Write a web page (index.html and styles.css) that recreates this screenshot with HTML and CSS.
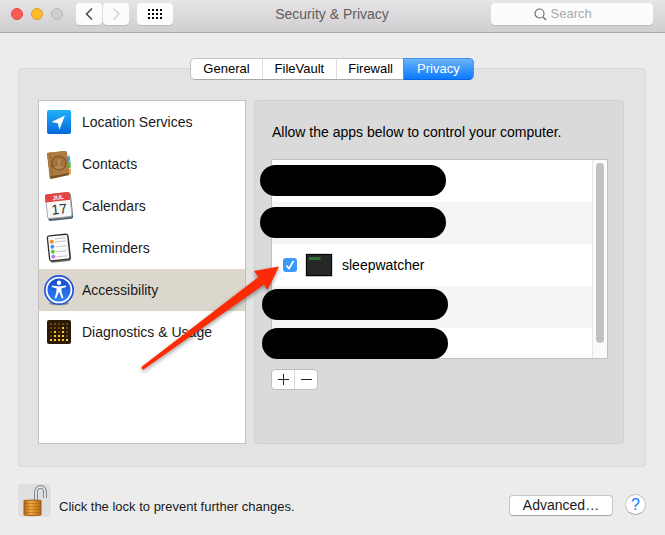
FILE: index.html
```html
<!DOCTYPE html>
<html lang="en">
<head>
<meta charset="utf-8">
<meta name="viewport" content="width=device-width, initial-scale=1">
<title>Security &amp; Privacy</title>
<link rel="stylesheet" href="styles.css">
</head>
<body>
<header class="toolbar">
  <div class="toolbar-left">
    <div class="lights">
      <button class="light close" aria-label="Close"></button>
      <button class="light minimize" aria-label="Minimize"></button>
      <button class="light zoom" aria-label="Zoom" disabled></button>
    </div>
    <div class="history">
      <button class="tool" aria-label="Back"><svg width="10" height="14" viewBox="0 0 10 14"><path d="M8 1.500 2.500 7 8 12.500" fill="none" stroke="#4d4d4d" stroke-width="1.600"/></svg></button>
      <button class="tool" aria-label="Forward" disabled><svg width="10" height="14" viewBox="0 0 10 14"><path d="M2.500 1.500 8 7l-5.500 5.500" fill="none" stroke="#cfcfcf" stroke-width="1.400"/></svg></button>
    </div>
    <button class="tool show-all" aria-label="Show All"><svg width="14" height="10" viewBox="0 0 14 10"><path d="M0 1h14M0 5h14M0 9h14" stroke="#000" stroke-width="2" stroke-dasharray="2 2"/></svg></button>
  </div>
  <h1 class="title">Security &amp; Privacy</h1>
  <label class="search">
    <svg width="13" height="13" viewBox="0 0 13 13"><circle cx="5.500" cy="5.500" r="4.500" fill="none" stroke="#6c6c6c" stroke-width="1.200"/><path d="m9 9 3 3" stroke="#6c6c6c" stroke-width="1.400"/></svg>
    <input type="search" placeholder="Search" aria-label="Search">
  </label>
</header>

<main class="content">
  <div class="tabs" role="tablist">
    <button class="tab" role="tab" aria-selected="false">General</button>
    <button class="tab" role="tab" aria-selected="false">FileVault</button>
    <button class="tab" role="tab" aria-selected="false">Firewall</button>
    <button class="tab active" role="tab" aria-selected="true">Privacy</button>
  </div>

  <section class="group">
    <nav class="sidebar">
      <a class="item" href="#location">
        <svg width="30" height="32" viewBox="0 0 30 32"><defs><linearGradient id="loc" x2="0" y2="1"><stop stop-color="#20b2fa"/><stop offset="1" stop-color="#0767dc"/></linearGradient></defs><rect x="3" y="4" width="24" height="24" rx="2" fill="url(#loc)"/><path d="M21 9.500 7.500 16l6.500 1.200 1.300 6.500z" fill="#fff"/></svg>
        Location Services</a>
      <a class="item" href="#contacts">
        <svg width="30" height="32" viewBox="0 0 30 32"><path d="M22 5l4 1 1 21-4 2z" fill="#e9e6df"/><path d="m23 8 3 .5.300 5-3 .2z" fill="#42a7dc"/><path d="m23 14 3.500-.2.300 6-3.500.2z" fill="#62b554"/><path d="m23 21 3.800-.3.200 5-3.500.6z" fill="#eda337"/><path d="M3 5 21 3q1.500 0 1.700 1.500L25 26q0 1-1 1.300L7 31q-1 0-1.200-1z" fill="#795224"/><path d="M3 5 21 3q1.500 0 1.700 1.500L24.800 25 6 28.500z" fill="#ae7b43"/><path d="m6 4.600 2.500 23.500" stroke="#946535" fill="none"/><circle cx="15" cy="15" r="7" fill="#a87639" stroke="#7d5327" stroke-width="1.200"/><path d="M9.500 19.500q1-2 4-2.500v-1q-3-5.500 1.500-6 4.500.5 1.500 6v1q3 .5 4 2.500-5.500 4-11 0z" fill="#b78a55" stroke="#86592c" stroke-width=".7"/></svg>
        Contacts</a>
      <a class="item" href="#calendars">
        <svg width="30" height="32" viewBox="0 0 30 32"><g transform="rotate(-6 15 16)"><rect x="3" y="4" width="25" height="26" rx="2" fill="#55616a"/><rect x="2.500" y="3.500" width="24.500" height="24" rx="2" fill="#f8f8f8" stroke="#a6abb0"/><path d="M2 11V5q0-2 2-2h21q2 0 2 2v6z" fill="#e34440"/><text class="cal-month" x="15" y="9.500">JUL</text><text class="cal-day" x="15" y="24">17</text></g></svg>
        Calendars</a>
      <a class="item" href="#reminders">
        <svg width="30" height="32" viewBox="0 0 30 32"><g transform="rotate(-6 15 16)"><rect x="5" y="4" width="21" height="26" rx="2.500" fill="#777"/><rect x="4.500" y="3" width="20.500" height="25" rx="2" fill="#fafafa" stroke="#303030" stroke-width="1.300"/><path d="M11.500 6.500h11M11.500 9.500h11M11.500 14.500h11M11.500 19.500h11M11.500 24.500h11" stroke="#c6c6c6"/><circle cx="8.500" cy="9" r="2" fill="#f58b1d"/><circle cx="8.500" cy="14" r="2" fill="#4f8bea"/><circle cx="8.500" cy="19" r="2" fill="#58c83e"/><circle cx="8.500" cy="24" r="2" fill="#bd78e4"/></g></svg>
        Reminders</a>
      <a class="item selected" href="#accessibility" aria-current="page">
        <svg width="30" height="32" viewBox="0 0 30 32"><defs><linearGradient id="acc" x2="0" y2="1"><stop stop-color="#1746c8"/><stop offset="1" stop-color="#2e86fb"/></linearGradient></defs><ellipse cx="15" cy="29.500" rx="10" ry="1.800" fill="#000" opacity=".35"/><circle cx="15" cy="16" r="15" fill="#2453d6"/><circle cx="15" cy="16" r="12.400" fill="url(#acc)" stroke="#fff" stroke-width="1.800"/><circle cx="15" cy="8.800" r="2.200" fill="#fff"/><path d="m8 11.500 5.500.8h3l5.500-.8.3 1.500-5 1.500.5 4 1.600 5.500-1.500.5-2.500-6h-.8l-2.500 6-1.500-.5 1.600-5.500.5-4-5-1.500z" fill="#fff"/></svg>
        Accessibility</a>
      <a class="item" href="#diagnostics">
        <svg width="30" height="32" viewBox="0 0 30 32"><rect x="3" y="4" width="24" height="24" rx="2" fill="#2b1a07"/><path d="M6 8h19M6 12h19M6 16h19M6 20h19M6 24h19" stroke="#6b430d" stroke-width="2" stroke-dasharray="2 2"/><path d="M6 24h19M14 20h7M10 16h1M18 16h3M18 12h3M10 16h2M10 20h2" stroke="#ffc826" stroke-width="2" stroke-dasharray="2 2"/></svg>
        Diagnostics &amp; Usage</a>
    </nav>

    <div class="pane">
      <p class="prompt">Allow the apps below to control your computer.</p>
      <div class="applist">
        <ul class="rows">
          <li class="row"><span class="redacted"></span></li>
          <li class="row"><span class="redacted"></span></li>
          <li class="row">
            <label class="app">
              <input class="check" type="checkbox" checked>
              <svg width="28" height="25" viewBox="0 0 28 25"><rect x=".5" y=".5" width="27" height="23.500" fill="#b6c0c5"/><rect x="1" y="1" width="26" height="22" fill="#050505"/><rect x="2" y="2" width="24" height="20" fill="#272727"/><text class="exec" x="4" y="6.500">exec</text></svg>
              sleepwatcher
            </label>
          </li>
          <li class="row"><span class="redacted inset"></span></li>
          <li class="row last"><span class="redacted inset"></span></li>
        </ul>
        <div class="track"><div class="thumb"></div></div>
      </div>
      <div class="addremove">
        <button aria-label="Add"><svg width="11" height="11" viewBox="0 0 11 11"><path d="M0 5.500h11M5.500 0v11" stroke="#222" stroke-width="1"/></svg></button>
        <button aria-label="Remove"><svg width="11" height="11" viewBox="0 0 11 11"><path d="M0 5.500h11" stroke="#222" stroke-width="1"/></svg></button>
      </div>
    </div>
    <svg class="arrow" width="150" height="116" viewBox="0 0 150 116" aria-hidden="true"><path d="M142 7.500 117 12l4.500 6L5 107.500q-1.500 3 1.500 3L127 25.500l3.500 5.500z" fill="#fd2b05"/></svg>
  </section>

  <footer class="footer">
    <button class="lock" aria-label="Lock"><svg width="33" height="33" viewBox="0 0 33 33"><defs><linearGradient id="brass"><stop stop-color="#b86a13"/><stop offset=".4" stop-color="#f0a840"/><stop offset="1" stop-color="#b76615"/></linearGradient></defs><path d="M18 17V9q0-6 4.500-6T27 9v5" fill="none" stroke="#6d767b" stroke-width="3.600"/><path d="M18 17V9q0-6 4.500-6T27 9v5" fill="none" stroke="#dbe0e2" stroke-width="2"/><path d="M6 16.500q8.500-1 17 0V31q-8.500 1.500-17 0z" fill="url(#brass)" stroke="#a35a12"/><path d="M6 19.500h17M6 22.500h17M6 25.500h17M6 28.500h17" fill="none" stroke="#945210" opacity=".4"/></svg></button>
    <p class="lock-text">Click the lock to prevent further changes.</p>
    <button class="advanced">Advanced…</button>
    <button class="help" aria-label="Help">?</button>
  </footer>
</main>
</body>
</html>
```
FILE: styles.css
```css
* { box-sizing: border-box; }

body {
  margin: 0;
  min-height: 100vh;
  background: #ececec;
  color: #1a1a1a;
  font: 14px/16px "Liberation Sans", Arial, sans-serif;
}

button, input { font: inherit; color: inherit; }
button { border: 0; padding: 0; background: none; }
svg { display: block; flex: none; }
p, h1, ul { margin: 0; padding: 0; }

.toolbar {
  display: grid;
  grid-template-columns: 1fr auto 1fr;
  align-items: start;
  height: 33px;
  padding: 3px 12px 0 11px;
  background: linear-gradient(#e6e4e6, #d0ced0);
  border-bottom: 1px solid #aaa8aa;
}
.toolbar-left, .lights, .history { display: flex; align-items: center; }
.toolbar-left { gap: 8px; }
.lights { gap: 8px; margin-right: 5px; }
.light { width: 12px; height: 12px; border-radius: 50%; border: 1px solid; }
.close { background: #fd5b54; border-color: #e14640; }
.minimize { background: #fdbb2d; border-color: #dfa023; }
.zoom { background: #cfcfcf; border-color: #b8b8b8; }
.history { gap: 1px; }
.tool {
  display: flex;
  align-items: center;
  justify-content: center;
  width: 26px;
  height: 22px;
  background: #fcfcfc;
  border-radius: 4px;
  box-shadow: 0 1px 0 #bbb;
}
.show-all { width: 36px; }
.title { font-size: 14px; line-height: 23px; font-weight: normal; color: #5f5d5f; }
.search {
  display: flex;
  align-items: center;
  justify-content: center;
  gap: 4px;
  justify-self: end;
  width: 162px;
  height: 22px;
  background: #fcfcfc;
  border-radius: 4px;
  box-shadow: 0 1px 0 #bbb;
  font-size: 13px;
}
.search input {
  width: 60px;
  padding: 0;
  border: 0;
  outline: 0;
  background: none;
  appearance: none;
}
.search input::placeholder { color: #aaa; }

.content { padding: 25px 19px 17px 18px; }

.tabs {
  position: relative;
  z-index: 1;
  display: flex;
  width: max-content;
  margin: 0 auto -12px;
  border: 1px solid #c2c2c2;
  border-bottom-color: #a8a8a8;
  border-radius: 5px;
  background: #fff;
  font-size: 13px;
}
.tab { height: 20px; padding: 0 11px; color: #000; }
.tab + .tab { border-left: 1px solid #ddd; }
.tab:first-child, .tab:nth-child(2) { padding: 0 12px; }
.tabs .active {
  margin: -1px;
  height: 22px;
  padding: 0 13px;
  border: 1px solid #3d93f0;
  border-bottom-color: #0a63e0;
  border-radius: 0 5px 5px 0;
  background: linear-gradient(#6ab3fa, #0a7aff);
  color: #fff;
}

.group {
  position: relative;
  display: flex;
  gap: 8px;
  padding: 31px 21px 22px 19px;
  background: #e3e3e3;
  border: 1px solid #d8d8d8;
  border-radius: 4px;
}
.sidebar {
  flex: 0 0 208px;
  background: #fff;
  border: 1px solid #c0c0c0;
}
.item {
  display: flex;
  align-items: center;
  gap: 8px;
  height: 42px;
  padding-left: 5px;
  color: #1a1a1a;
  text-decoration: none;
}
.selected { background: #dcd7cd; }
.cal-month { font: bold 6px "Liberation Sans", sans-serif; fill: #fff; text-anchor: middle; }
.cal-day { font: 14px "Liberation Sans", sans-serif; fill: #333; text-anchor: middle; }
.exec { font: bold 5px "Liberation Mono", monospace; fill: #35b845; }

.pane {
  flex: 1;
  padding: 23px 15px 53px 17px;
  background: #dadada;
  border: 1px solid #d0d0d0;
  border-radius: 4px;
}
.prompt { margin-bottom: 19px; color: #000; }
.applist {
  display: flex;
  margin-left: -1px;
  background: #fff;
  border: 1px solid #c0c0c0;
}
.rows { flex: 1; list-style: none; }
.row { position: relative; height: 42px; }
.row:nth-child(even) { background: #f5f5f5; }
.row.last { height: 30px; }
.app {
  display: flex;
  align-items: center;
  height: 42px;
  padding-left: 11px;
  color: #000;
}
.app svg { margin: 0 9px 0 8px; }
.check {
  appearance: none;
  width: 14px;
  height: 14px;
  margin: 0;
  border-radius: 3px;
  background: #3b99fc url("data:image/svg+xml,%3Csvg xmlns='http://www.w3.org/2000/svg' viewBox='0 0 14 14'%3E%3Cpath d='m3.500 7.500 2.500 3 4.500-7.500' fill='none' stroke='white' stroke-width='1.700'/%3E%3C/svg%3E");
}
.redacted {
  position: absolute;
  z-index: 1;
  top: 5px;
  left: -12px;
  width: 186px;
  height: 31px;
  border-radius: 16px;
  background: #000;
}
.redacted.inset { top: 3px; left: -10px; }
.last .redacted.inset { top: 0; }
.track {
  width: 15px;
  padding: 3px;
  background: #fafafa;
  border-left: 1px solid #e6e6e6;
}
.thumb { width: 8px; height: 180px; border-radius: 4px; background: #c1c1c1; }

.addremove {
  display: flex;
  width: max-content;
  margin: 10px 0 0 -1px;
  border: 1px solid #bdbdbd;
  border-radius: 4px;
  background: #fff;
}
.addremove button {
  display: flex;
  align-items: center;
  justify-content: center;
  width: 22px;
  height: 19px;
}
.addremove button + button { width: 23px; border-left: 1px solid #d8d8d8; }

.arrow {
  position: absolute;
  left: 118px;
  top: 190px;
  z-index: 2;
  filter: drop-shadow(0 2px 2px rgb(0 0 0 / 40%));
}

.footer { display: flex; align-items: center; margin-top: 17px; }
.lock { width: 33px; height: 33px; border-radius: 4px; background: #dfdfdf; }
.lock-text { margin: 12px auto 0 8px; font-size: 13px; }
.advanced {
  width: 104px;
  height: 21px;
  margin: 9px 12px 0 0;
  background: #fff;
  border: 1px solid #c4c4c4;
  border-bottom-color: #a8a8a8;
  border-radius: 4px;
}
.help {
  width: 21px;
  height: 21px;
  margin-top: 8px;
  background: #fff;
  border: 1px solid #c4c4c4;
  border-bottom-color: #a8a8a8;
  border-radius: 50%;
  color: #0a7aff;
  font-size: 16px;
}
```
